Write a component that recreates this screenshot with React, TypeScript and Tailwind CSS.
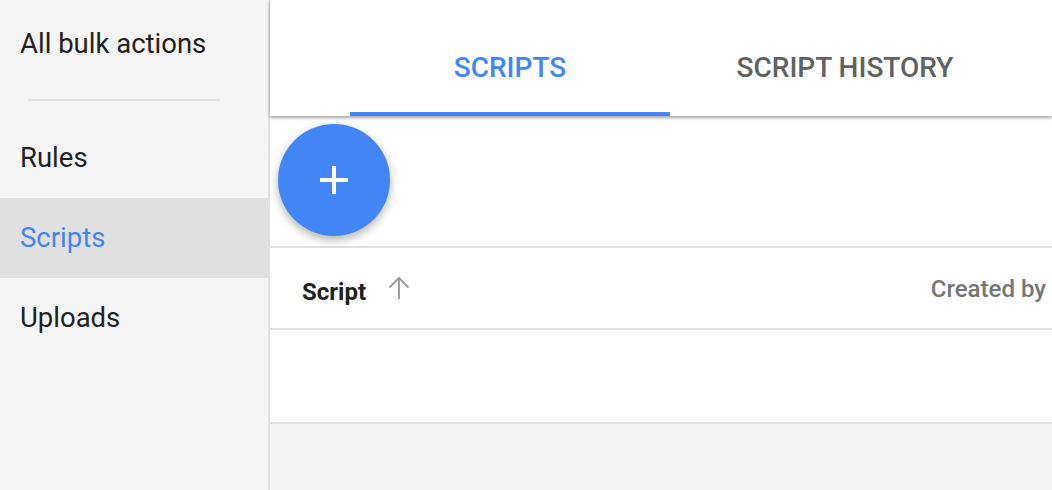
const font = { fontFamily: "Roboto, 'Noto Sans', sans-serif" };

function SideItem({ label, active = false }: { label: string; active?: boolean }) {
  return (
    <div
      className={`flex h-[80px] items-center pl-5 text-[27.5px] ${
        active ? "bg-[#e0e0e0] text-[#4285f4]" : "text-[#212121]"
      }`}
    >
      {label}
    </div>
  );
}

function Tab({ label, active = false, width }: { label: string; active?: boolean; width: string }) {
  return (
    <div
      className={`flex h-full items-center justify-center border-b-4 pt-6 text-[28px] font-medium uppercase ${width} ${
        active ? "border-[#4285f4] text-[#4285f4]" : "border-transparent text-[#616161]"
      }`}
    >
      {label}
    </div>
  );
}

export default function App() {
  return (
    <div className="flex h-[490px] w-[1052px] overflow-hidden bg-[#f4f4f4]" style={font}>
      <aside className="flex w-[270px] shrink-0 flex-col border-r-2 border-[#e0e0e0] bg-[#f5f5f5]">
        <div className="flex h-[88px] items-center pl-5 text-[27.5px] text-[#212121]">All bulk actions</div>
        <div className="mx-[28px] mt-[11px] mb-[17px] h-[2px] w-[192px] bg-[#e0e0e0]" />
        <SideItem label="Rules" />
        <SideItem label="Scripts" active />
        <SideItem label="Uploads" />
      </aside>

      <main className="flex flex-1 flex-col">
        <div className="relative z-10 flex h-[116px] bg-white pl-[80px] shadow-[0_2px_3px_rgba(0,0,0,0.35)]">
          <Tab label="Scripts" active width="w-[320px]" />
          <Tab label="Script history" width="w-[350px]" />
        </div>

        <div className="h-[132px] border-b-2 border-[#e0e0e0] bg-white pt-2 pl-2">
          <button className="flex h-[112px] w-[112px] items-center justify-center rounded-full bg-[#4285f4] shadow-[0_4px_10px_rgba(0,0,0,0.3)]">
            <svg width="30" height="30" viewBox="0 0 30 30">
              <path d="M15 1v28M1 15h28" stroke="white" strokeWidth="4" />
            </svg>
          </button>
        </div>

        <div className="flex h-[82px] items-center justify-between border-b-2 border-[#e0e0e0] bg-white pt-[8px] pr-[6px] pl-[32px]">
          <div className="flex items-center gap-[22px]">
            <span className="text-[24px] font-bold text-[#212121]">Script</span>
            <svg width="22" height="24" viewBox="0 0 22 24" className="-mt-[8px]">
              <path d="M11 2v21M1.5 11.5L11 2l9.5 9.5" fill="none" stroke="#9e9e9e" strokeWidth="2" />
            </svg>
          </div>
          <span className="-mt-[6px] text-[24px] font-medium text-[#757575]">Created by</span>
        </div>

        <div className="h-[94px] border-b-2 border-[#e0e0e0] bg-white" />
      </main>
    </div>
  );
}
